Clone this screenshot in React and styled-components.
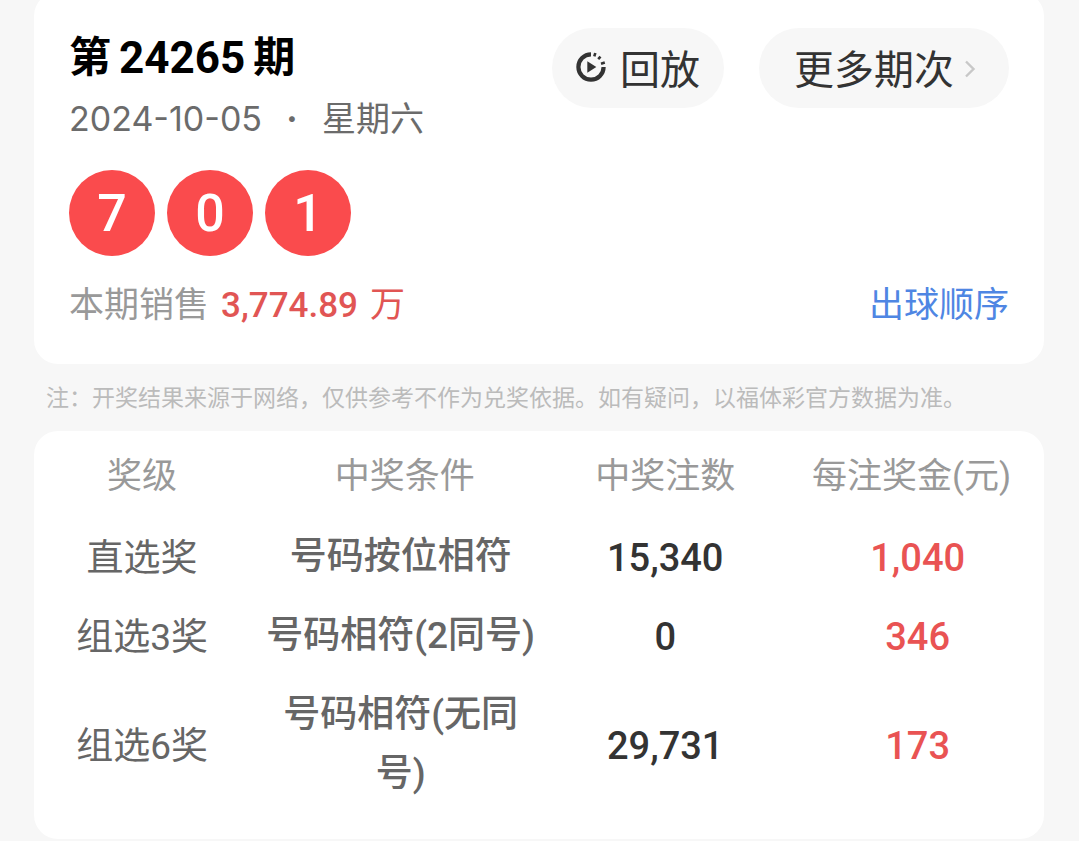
import React from 'react';
import styled, { createGlobalStyle } from 'styled-components';

const balls = ['7', '0', '1'];

const prizes = [
  { id: 1, level: '直选奖', rule: '号码按位相符', count: '15,340', amount: '1,040' },
  { id: 2, level: '组选3奖', rule: '号码相符(2同号)', count: '0', amount: '346' },
  { id: 3, level: '组选6奖', rule: '号码相符(无同号)', count: '29,731', amount: '173' },
];

const App = () => {
  return (
    <>
      <GlobalStyle />
      <Page>
        <DrawCard>
          <Header>
            <div>
              <Title>
                第<Issue>24265</Issue>期
              </Title>
              <DateLine>
                <span>2024-10-05</span>
                <Dot>·</Dot>
                <span>星期六</span>
              </DateLine>
            </div>
            <Actions>
              <PillButton type="button">
                <ReplayIcon viewBox="0 0 30 30" aria-hidden="true">
                  <path d="M15 2.4A12.6 12.6 0 1 0 27.6 15" fill="none" stroke="#333333" strokeWidth="4.2" />
                  <path
                    d="M18.3 4.4l1-3.4M22.2 7.2l2.3-2.5M25 11.8l3.8-1.2"
                    fill="none"
                    stroke="#333333"
                    strokeWidth="2.6"
                  />
                  <path d="M11.3 9.2v11.6l9-5.8z" fill="#333333" />
                </ReplayIcon>
                回放
              </PillButton>
              <PillButton type="button" $wide>
                更多期次
                <Chevron viewBox="0 0 12 20" aria-hidden="true">
                  <path d="M2 2.5l7.5 7.5L2 17.5" fill="none" stroke="#c8c8c8" strokeWidth="2.4" />
                </Chevron>
              </PillButton>
            </Actions>
          </Header>
          <BallList>
            {balls.map((ball, index) => (
              <Ball key={index}>{ball}</Ball>
            ))}
          </BallList>
          <SalesRow>
            <Sales>
              本期销售
              <SalesValue>3,774.89</SalesValue>
              <SalesUnit>万</SalesUnit>
            </Sales>
            <OrderLink href="#order">出球顺序</OrderLink>
          </SalesRow>
        </DrawCard>

        <Note>注：开奖结果来源于网络，仅供参考不作为兑奖依据。如有疑问，以福体彩官方数据为准。</Note>

        <PrizeCard>
          <PrizeTable>
            <colgroup>
              <Col $width="21%" />
              <Col $width="31%" />
              <Col $width="21%" />
              <Col $width="27%" />
            </colgroup>
            <thead>
              <tr>
                <HeadCell $indent="4px">奖级</HeadCell>
                <HeadCell $indent="4px">中奖条件</HeadCell>
                <HeadCell>中奖注数</HeadCell>
                <HeadCell $indent="8px">每注奖金(元)</HeadCell>
              </tr>
            </thead>
            <tbody>
              {prizes.map((prize) => (
                <tr key={prize.id}>
                  <Cell $indent="4px">{prize.level}</Cell>
                  <RuleCell>{prize.rule}</RuleCell>
                  <NumberCell>{prize.count}</NumberCell>
                  <NumberCell $indent="20px" $prize>
                    {prize.amount}
                  </NumberCell>
                </tr>
              ))}
            </tbody>
          </PrizeTable>
        </PrizeCard>
      </Page>
    </>
  );
};

export default App;

const GlobalStyle = createGlobalStyle`
  * {
    box-sizing: border-box;
  }

  body {
    margin: 0;
    background-color: #f7f7f7;
    font-family: Roboto, 'Noto Sans CJK SC', sans-serif;
  }
`;

const Page = styled.main`
  padding: 0 35px 0 34px;
  overflow: hidden;
`;

// the card is scrolled a little past the top edge
const DrawCard = styled.section`
  margin-top: -8px;
  padding: 36px 35px 28px;
  border-radius: 24px;
  background-color: #ffffff;
`;

const Header = styled.header`
  display: flex;
  justify-content: space-between;
  align-items: flex-start;
`;

const Title = styled.h1`
  display: flex;
  align-items: center;
  margin: 0;
  font-size: 42px;
  font-weight: 700;
  line-height: 60px;
  color: #000000;
`;

const Issue = styled.span`
  margin: 0 8px;
  font-size: 44px;
`;

const DateLine = styled.div`
  display: flex;
  font-family: Inter, 'Noto Sans CJK SC', sans-serif;
  font-size: 34px;
  line-height: 62px;
  color: #6b6b6b;
`;

const Dot = styled.span`
  width: 60px;
  font-weight: 700;
  text-align: center;
`;

const Actions = styled.div`
  display: flex;
  gap: 35px;
`;

const PillButton = styled.button`
  display: flex;
  align-items: center;
  gap: ${(props) => (props.$wide ? '10px' : '14px')};
  height: 80px;
  padding: ${(props) => (props.$wide ? '0 33px 2px 35px' : '0 24px 2px')};
  border: none;
  border-radius: 40px;
  background-color: #f7f7f7;
  font-family: inherit;
  font-size: 40px;
  color: #333333;
  cursor: pointer;
`;

const ReplayIcon = styled.svg`
  width: 30px;
  height: 30px;
`;

const Chevron = styled.svg`
  width: 12px;
  height: 20px;
  margin-top: 4px;
`;

const BallList = styled.div`
  display: flex;
  gap: 12px;
  margin: 20px 0;
`;

const Ball = styled.span`
  display: flex;
  align-items: center;
  justify-content: center;
  width: 86px;
  height: 86px;
  border-radius: 50%;
  background-color: #fa4b4d;
  font-size: 52px;
  font-weight: 500;
  color: #ffffff;
`;

const SalesRow = styled.div`
  display: flex;
  justify-content: space-between;
  font-size: 35px;
  line-height: 60px;
`;

const Sales = styled.div`
  display: flex;
  color: #999999;
`;

const SalesValue = styled.span`
  margin: 0 12px;
  font-weight: 500;
  color: #e15554;
`;

const SalesUnit = styled.span`
  color: #e15554;
`;

const OrderLink = styled.a`
  color: #4f86e3;
  text-decoration: none;
`;

const Note = styled.p`
  margin: 0;
  padding: 18px 12px 16px;
  font-size: 23px;
  line-height: 33px;
  color: #bbbbbb;
`;

const PrizeCard = styled.section`
  padding-bottom: 26px;
  border-radius: 24px;
  background-color: #ffffff;
`;

const PrizeTable = styled.table`
  width: 100%;
  table-layout: fixed;
  border-collapse: collapse;
  text-align: center;
`;

const Col = styled.col`
  width: ${(props) => props.$width};
`;

const HeadCell = styled.th`
  height: 86px;
  padding: 0 0 4px ${(props) => props.$indent || '0'};
  font-size: 35px;
  font-weight: 400;
  color: #999999;
  white-space: nowrap;
`;

const Cell = styled.td`
  padding: 12px 0 8px ${(props) => props.$indent || '0'};
  font-size: 37px;
  line-height: 59px;
  color: #666666;
`;

const RuleCell = styled(Cell)`
  padding: 10px 22px 10px 18px;
  font-weight: 500;
`;

const NumberCell = styled(Cell)`
  font-size: 38px;
  font-weight: 500;
  color: ${(props) => (props.$prize ? '#e95353' : '#333333')};
`;
